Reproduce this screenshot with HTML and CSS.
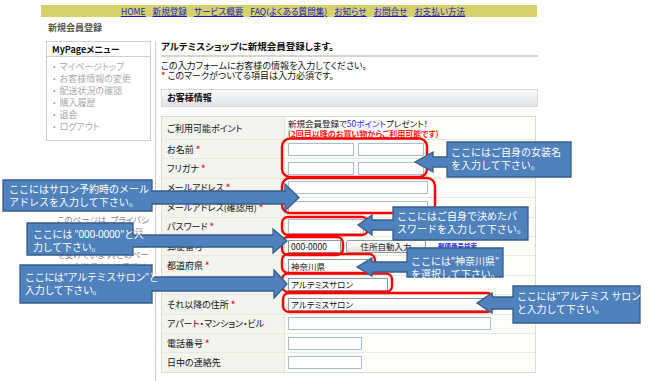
FILE: index.html
```html
<!DOCTYPE html>
<html lang="ja">
<head>
<meta charset="utf-8">
<title>新規会員登録</title>
<link rel="stylesheet" href="styles.css">
</head>
<body>
<div class="page">
  <nav class="nav">
    <a href="#">HOME</a>
    <a href="#">新規登録</a>
    <a href="#">サービス概要</a>
    <a href="#">FAQ(よくある質問集)</a>
    <a href="#">お知らせ</a>
    <a href="#">お問合せ</a>
    <a href="#">お支払い方法</a>
  </nav>
  <div class="pagetitle">新規会員登録</div>
  <div class="columns">
    <aside class="side">
      <div class="menu">
        <div class="menu-head">MyPageメニュー</div>
        <ul class="menu-list">
          <li>マイページトップ</li>
          <li>お客様情報の変更</li>
          <li>配送状況の確認</li>
          <li>購入履歴</li>
          <li>退会</li>
          <li>ログアウト</li>
        </ul>
      </div>
      <div class="seal"></div>
      <p class="ssl">このページは、プライバシ<br>ー保護のため、SSL暗号<br>化通信による認証を採用<br>を受けています。このペー<br>ジから送信される情報は<br>暗号化されます。</p>
    </aside>
    <main class="main">
      <h1 class="heading">アルテミスショップに新規会員登録します。</h1>
      <p class="intro">この入力フォームにお客様の情報を入力してください。<br><span class="req">*</span> このマークがついてる項目は入力必須です。</p>
      <h2 class="sec">お客様情報</h2>
      <div class="form">
        <div class="row points">
          <div class="lbl"><span>ご利用可能ポイント</span></div>
          <div class="val pts">新規会員登録で<span class="blue">50ポイント</span>プレゼント！<br><span class="redb">(2回目以降のお買い物からご利用可能です)</span></div>
        </div>
        <div class="row">
          <div class="lbl"><span>お名前 <span class="req">*</span></span></div>
          <div class="val"><span class="inp w66"></span><span class="inp w66"></span></div>
        </div>
        <div class="row">
          <div class="lbl"><span>フリガナ <span class="req">*</span></span></div>
          <div class="val"><span class="inp w66"></span><span class="inp w66"></span></div>
        </div>
        <div class="row">
          <div class="lbl"><span>メールアドレス <span class="req">*</span></span></div>
          <div class="val"><span class="inp w140"></span></div>
        </div>
        <div class="row">
          <div class="lbl"><span>メールアドレス(確認用) <span class="req">*</span></span></div>
          <div class="val"><span class="inp w140"></span></div>
        </div>
        <div class="row">
          <div class="lbl"><span>パスワード <span class="req">*</span></span></div>
          <div class="val"><span class="inp w76 tall"></span></div>
        </div>
        <div class="row">
          <div class="lbl"><span>郵便番号 <span class="req">*</span></span></div>
          <div class="val"><span class="inp w53 txt">000-0000</span><span class="btn">住所自動入力</span><a class="zlink" href="#">郵便番号検索</a></div>
        </div>
        <div class="row">
          <div class="lbl"><span>都道府県 <span class="req">*</span></span></div>
          <div class="val"><span class="sel">神奈川県</span></div>
        </div>
        <div class="row">
          <div class="lbl"><span>市区町村 <span class="req">*</span></span></div>
          <div class="val"><span class="inp w100 txt">アルテミスサロン</span></div>
        </div>
        <div class="row">
          <div class="lbl"><span>それ以降の住所 <span class="req">*</span></span></div>
          <div class="val"><span class="inp w203 txt">アルテミスサロン</span></div>
        </div>
        <div class="row">
          <div class="lbl"><span>アパート・マンション・ビル</span></div>
          <div class="val"><span class="inp w203"></span></div>
        </div>
        <div class="row">
          <div class="lbl"><span>電話番号 <span class="req">*</span></span></div>
          <div class="val"><span class="inp w74"></span></div>
        </div>
        <div class="row">
          <div class="lbl"><span>日中の連絡先</span></div>
          <div class="val"><span class="inp w74"></span></div>
        </div>
      </div>
    </main>
  </div>

  <div class="notes">
    <svg class="notes-svg" width="650" height="381" viewBox="0 0 650 381">
      <g fill="none" stroke="#ff0000" stroke-width="2.4">
        <rect x="282" y="138.5" width="145" height="38.5" rx="8"/>
        <rect x="282" y="178" width="153" height="35" rx="8"/>
        <rect x="282" y="217" width="86" height="18" rx="6"/>
        <rect x="282" y="237" width="61" height="18" rx="6"/>
        <rect x="282" y="254" width="93" height="19" rx="6"/>
        <rect x="282" y="273.5" width="110" height="18.5" rx="6"/>
        <rect x="283" y="293" width="210" height="19" rx="6"/>
      </g>
      <g fill="#4f81bd" stroke="#385d8a" stroke-width="1.3" stroke-linejoin="miter">
        <polygon points="571,142 447,142 447,157 433,157 433,152 415,162 433,172 433,167 447,167 447,177 571,177"/>
        <polygon points="3,180 152,180 152,191 285,191 285,184 299,197.5 285,211 285,204 152,204 152,211 3,211"/>
        <polygon points="528,207 393,207 393,220 372,220 372,215 358,225 372,235 372,230 393,230 393,240 528,240"/>
        <polygon points="27,223 133,223 133,235 273,235 273,229 287,241 273,253 273,247 133,247 133,255 27,255"/>
        <polygon points="503,248 407,248 407,262 372,262 372,258 357,267 372,276 372,272 407,272 407,277 503,277"/>
        <polygon points="20,265 152,265 152,277 274,277 274,270 287,284 274,298 274,291 152,291 152,303 20,303"/>
        <polygon points="640,286 513,286 513,297 492,297 492,293 477,303 492,313 492,309 513,309 513,323 640,323"/>
      </g>
    </svg>
    <div class="note n1">ここにはご自身の女装名<br>を入力して下さい。</div>
    <div class="note n2">ここにはサロン予約時のメール<br>アドレスを入力して下さい。</div>
    <div class="note n3">ここにはご自身で決めたパ<br>スワードを入力して下さい。</div>
    <div class="note n4">ここには "000-0000"と入<br>力して下さい。</div>
    <div class="note n5">ここには"神奈川県"<br>を選択して下さい。</div>
    <div class="note n6">ここには"アルテミスサロン"と<br>入力して下さい。</div>
    <div class="note n7">ここには"アルテミス サロン"<br>と入力して下さい。</div>
  </div>
</div>
</body>
</html>
```

FILE: styles.css
```css
* { box-sizing: border-box; margin: 0; padding: 0; }

html, body {
  width: 650px;
  height: 381px;
  overflow: hidden;
  background: #fff;
}

body {
  font-family: "Noto Sans CJK JP", "Noto Sans", sans-serif;
  font-size: 9px;
  color: #111;
  font-feature-settings: "palt";
}

.page {
  position: relative;
  width: 650px;
  height: 381px;
  overflow: hidden;
}

/* top navigation */
.nav {
  margin: 5px 0 0 41px;
  width: 496px;
  height: 12px;
  background: #d5d16b;
  display: flex;
  justify-content: center;
  gap: 7px;
  padding-left: 8px;
  font-size: 8.6px;
  line-height: 12px;
}
.nav a {
  color: #1a1acc;
  text-decoration: underline;
}

.pagetitle {
  margin: 5px 0 0 48px;
  font-size: 9px;
  line-height: 11px;
  font-weight: bold;
  color: #555;
}

.columns {
  display: flex;
  margin-top: 8px;
  height: 400px;
}

/* sidebar */
.side {
  width: 155px;
  padding-left: 46px;
  padding-right: 4px;
}
.menu {
  width: 105px;
  border: 1px solid #cfcfcf;
  padding-bottom: 7px;
}
.menu-head {
  font-weight: bold;
  font-size: 9px;
  line-height: 13px;
  padding: 1px 5px 0;
  border-bottom: 1px solid #cfcfcf;
  color: #111;
}
.menu-list {
  list-style: none;
  padding: 4px 0 0 5px;
  color: #aaa;
  font-size: 9px;
  line-height: 12px;
}
.menu-list li::before {
  content: "・";
  margin-right: 3px;
}

.seal {
  margin: 40px 0 0 47px;
  width: 16px;
  height: 30px;
  border-top: 3px solid #e23a3a;
  border-radius: 8px 8px 0 0;
}
.ssl {
  margin: 3px 0 0 11px;
  width: 90px;
  color: #888;
  font-size: 8.5px;
  line-height: 11.8px;
  white-space: nowrap;
}

/* main column */
.main {
  width: 385px;
  border-left: 1px solid #cdcdcd;
  padding-left: 5px;
}
.heading {
  font-size: 9.5px;
  line-height: 11px;
  font-weight: bold;
  color: #111;
  padding-bottom: 3px;
  border-bottom: 2px solid #d6d6cf;
  width: 377px;
}
.intro {
  margin-top: 4px;
  font-size: 9px;
  line-height: 10px;
}
.req { color: #ff1a1a; font-weight: bold; }

.sec {
  margin-top: 8px;
  width: 377px;
  height: 18px;
  border: 1px solid #dcdcd4;
  background: linear-gradient(#fbfbfb, #dfe3ea);
  font-size: 9px;
  line-height: 16px;
  padding-left: 5px;
  font-weight: bold;
  color: #111;
}

.form {
  margin-top: 9px;
  width: 375px;
  border: 1px solid #dedbcc;
  background: #fdfdf9;
}
.row {
  display: flex;
  height: 19.4px;
  border-top: 1px solid #ece9dc;
}
.row:first-child { border-top: 0; }
.row.points { height: 22px; }
.lbl {
  width: 123px;
  background: #f4f4ef;
  border-right: 1px solid #e6e3d6;
  padding-left: 5px;
  display: flex;
  align-items: center;
  font-size: 9px;
  white-space: nowrap;
}
.val {
  flex: 1;
  display: flex;
  align-items: center;
  gap: 4px;
  padding-left: 3px;
}
.pts {
  display: block;
  padding-top: 1px;
  font-size: 8.5px;
  line-height: 10px;
}
.blue { color: #2a2aff; }
.redb { color: #ff2020; font-weight: bold; font-size: 8px; }

.inp {
  display: inline-block;
  height: 13px;
  background: #fff;
  border: 1px solid #a9bdd4;
}
.inp.tall { height: 15px; }
.inp.txt {
  font-size: 8.5px;
  line-height: 11px;
  padding-left: 2px;
  color: #111;
  border-color: #8c9aaa;
}
.w53 { width: 53px; }
.w66 { width: 66px; }
.w74 { width: 74px; }
.w76 { width: 76px; }
.w100 { width: 100px; }
.w140 { width: 140px; }
.w203 { width: 203px; }

.btn {
  display: inline-block;
  width: 80px;
  height: 13px;
  margin-left: 1px;
  border: 1px solid #8d9db4;
  border-radius: 2px;
  background: linear-gradient(#ffffff, #e4e4dc);
  text-align: center;
  font-size: 8.5px;
  line-height: 11px;
  color: #222;
}
.zlink {
  margin-left: 8px;
  font-size: 6.5px;
  font-weight: bold;
  color: #2a2aff;
  text-decoration: none;
}
.sel {
  display: inline-block;
  width: 80px;
  height: 14px;
  border: 1px solid #8c9aaa;
  background: #fff;
  font-size: 8.5px;
  line-height: 12px;
  padding-left: 2px;
}

/* annotation overlay */
.notes {
  position: absolute;
  left: 0;
  top: 0;
  width: 650px;
  height: 381px;
  pointer-events: none;
}
.notes-svg {
  position: absolute;
  left: 0;
  top: 0;
}
.note {
  position: absolute;
  color: #fff;
  font-family: "Noto Sans", "Noto Sans CJK JP", sans-serif;
  font-size: 10px;
  line-height: 13px;
  white-space: nowrap;
  font-feature-settings: normal;
}
.n1 { left: 451px; top: 146px; }
.n2 { left: 9px; top: 183px; }
.n3 { left: 397px; top: 210px; }
.n4 { left: 33px; top: 228px; letter-spacing: -0.2px; }
.n5 { left: 411px; top: 255px; }
.n6 { left: 25px; top: 271px; letter-spacing: -0.3px; }
.n7 { left: 517px; top: 290px; letter-spacing: -0.2px; }
```
